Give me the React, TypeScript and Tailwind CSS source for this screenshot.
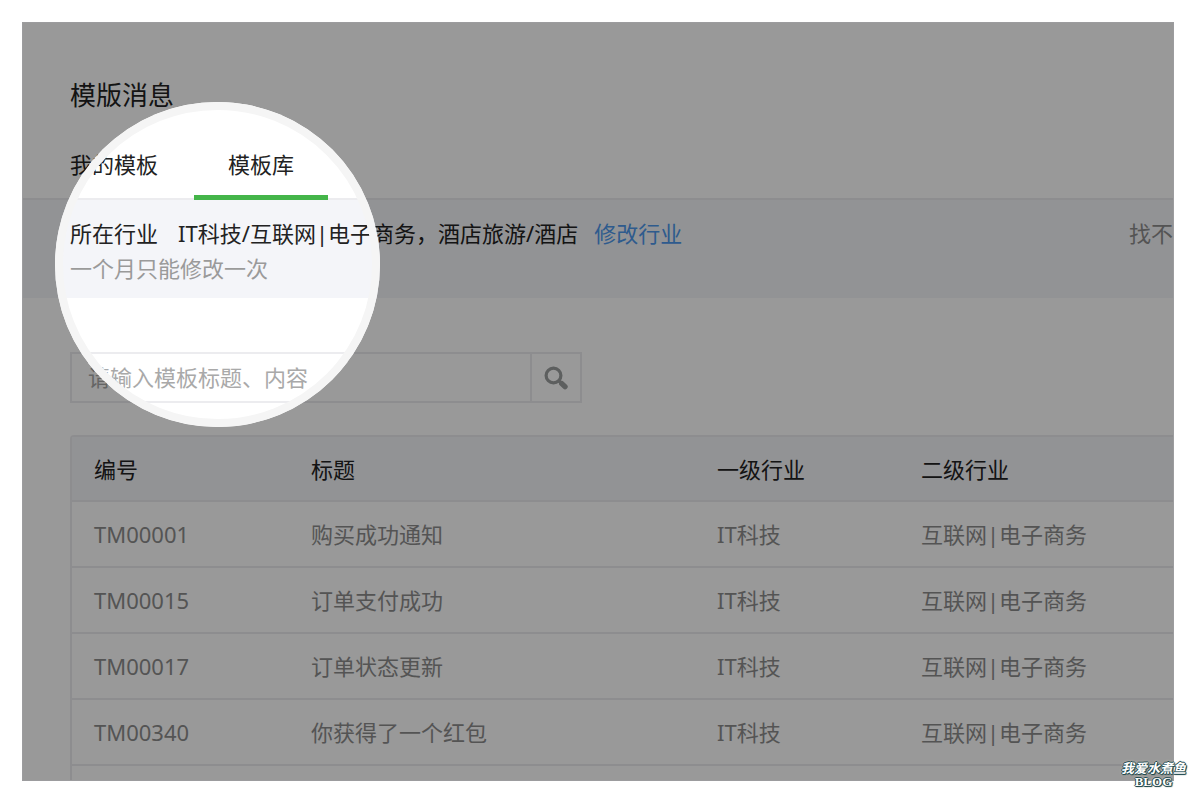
import { useState } from "react";

type Tab = "mine" | "library";

interface Template {
  id: string;
  title: string;
  primary: string;
  secondary: string;
}

const tabs: { value: Tab; label: string; width: string }[] = [
  { value: "mine", label: "我的模板", width: "" },
  { value: "library", label: "模板库", width: "w-[134px]" },
];

const templates: Template[] = [
  { id: "TM00001", title: "购买成功通知", primary: "IT科技", secondary: "互联网|电子商务" },
  { id: "TM00015", title: "订单支付成功", primary: "IT科技", secondary: "互联网|电子商务" },
  { id: "TM00017", title: "订单状态更新", primary: "IT科技", secondary: "互联网|电子商务" },
  { id: "TM00340", title: "你获得了一个红包", primary: "IT科技", secondary: "互联网|电子商务" },
];

function SearchIcon() {
  return (
    <svg width="24" height="24" viewBox="0 0 24 24" fill="none" stroke="#9b9e9e" aria-hidden="true">
      <circle cx="9.5" cy="9.5" r="7.4" strokeWidth="3.2" />
      <path d="M15 15l2.5 2.3" strokeWidth="3.6" />
      <path d="M17.8 17.6l3.2 3" strokeWidth="5.4" strokeLinecap="round" />
    </svg>
  );
}

function Tabs() {
  const [activeTab, setActiveTab] = useState<Tab>("library");

  return (
    <nav className="relative -mb-[2px] mt-[37px] flex gap-9 pl-[47px]">
      {tabs.map((tab) => (
        <button
          key={tab.value}
          type="button"
          onClick={() => setActiveTab(tab.value)}
          className={`border-b-[5px] pb-[15px] leading-8 ${tab.width} ${
            activeTab === tab.value ? "border-[#44b549]" : "border-transparent"
          }`}
        >
          {tab.label}
        </button>
      ))}
    </nav>
  );
}

function IndustryBar() {
  return (
    <section className="border-t-2 border-[#ececef] bg-[#f4f5f9] pb-3 pl-[47px] pt-4 leading-[35px]">
      <div className="flex whitespace-nowrap">
        <span className="mr-5">所在行业</span>
        <span className="mr-4">IT科技/互联网|电子商务，酒店旅游/酒店</span>
        <a href="#industry" className="text-[#4d98ec]">
          修改行业
        </a>
        <span className="ml-auto text-[#8d8d8d]">找不</span>
      </div>
      <p className="text-[#9a9a9a]">一个月只能修改一次</p>
    </section>
  );
}

function SearchBox() {
  return (
    <form className="flex h-[51px] w-[512px] border-2 border-[#ececef]" onSubmit={(e) => e.preventDefault()}>
      <input
        type="text"
        aria-label="请输入模板标题、内容"
        placeholder="请输入模板标题、内容"
        className="min-w-0 flex-1 bg-transparent px-4 outline-none placeholder:text-[#a9a9a9]"
      />
      <button
        type="submit"
        aria-label="搜索"
        className="flex w-[50px] items-center justify-center border-l-2 border-[#ececef]"
      >
        <SearchIcon />
      </button>
    </form>
  );
}

function TemplateTable() {
  return (
    <div className="ml-[47px] mt-8 rounded-tl border-l-2 border-t-2 border-[#ececef] pb-[14px]">
      <table className="w-full table-fixed border-separate border-spacing-0 whitespace-nowrap text-left">
        <thead className="bg-[#f4f5f9]">
          <tr className="h-[65px]">
            <th className="w-[217px] border-b-2 border-[#ececef] pl-[22px] pt-[2px] font-normal">编号</th>
            <th className="w-[406px] border-b-2 border-[#ececef] pl-[22px] pt-[2px] font-normal">标题</th>
            <th className="w-[204px] border-b-2 border-[#ececef] pl-[22px] pt-[2px] font-normal">一级行业</th>
            <th className="border-b-2 border-[#ececef] pl-[22px] pt-[2px] font-normal">二级行业</th>
          </tr>
        </thead>
        <tbody className="text-[#8d8d8d]">
          {templates.map((template) => (
            <tr key={template.id} className="h-[66px]">
              <td className="border-b-2 border-[#ececef] pl-[22px]">{template.id}</td>
              <td className="border-b-2 border-[#ececef] pl-[22px]">{template.title}</td>
              <td className="border-b-2 border-[#ececef] pl-[22px]">{template.primary}</td>
              <td className="border-b-2 border-[#ececef] pl-[22px]">{template.secondary}</td>
            </tr>
          ))}
        </tbody>
      </table>
    </div>
  );
}

export default function App() {
  return (
    <div className="relative min-h-screen bg-white pb-5 pl-[22px] pr-[26px] pt-[22px] font-['Noto_Sans','Noto_Sans_CJK_SC',sans-serif] text-[22px] text-[#222]">
      <main className="relative overflow-hidden border border-[#9c9c9e] bg-white pt-14" lang="zh-CN">
        <h1 className="pl-[47px] text-[26px] leading-8">模版消息</h1>
        <Tabs />
        <IndustryBar />
        <div className="pl-[47px] pt-[54px]">
          <SearchBox />
        </div>
        <TemplateTable />

        {/* spotlight: the huge shadow dims everything outside the ring */}
        <div className="pointer-events-none absolute left-8 top-[79px] size-[325px] rounded-full border-8 border-[#f5f5f5] shadow-[0_0_0_2000px_rgba(0,0,0,0.4)]" />
      </main>

      <div className="absolute right-[14px] top-[762px] text-center font-['Liberation_Serif','Noto_Sans_CJK_SC',serif] text-[13px] font-bold leading-[13px] text-white [text-shadow:1px_0_#1f4a50,-1px_0_#1f4a50,0_1px_#1f4a50,0_-1px_#1f4a50,1px_1px_1px_#1f4a50,0_0_3px_#d8d6c0]">
        <div className="italic">我爱水煮鱼</div>
        <div>BLOG</div>
      </div>
    </div>
  );
}
